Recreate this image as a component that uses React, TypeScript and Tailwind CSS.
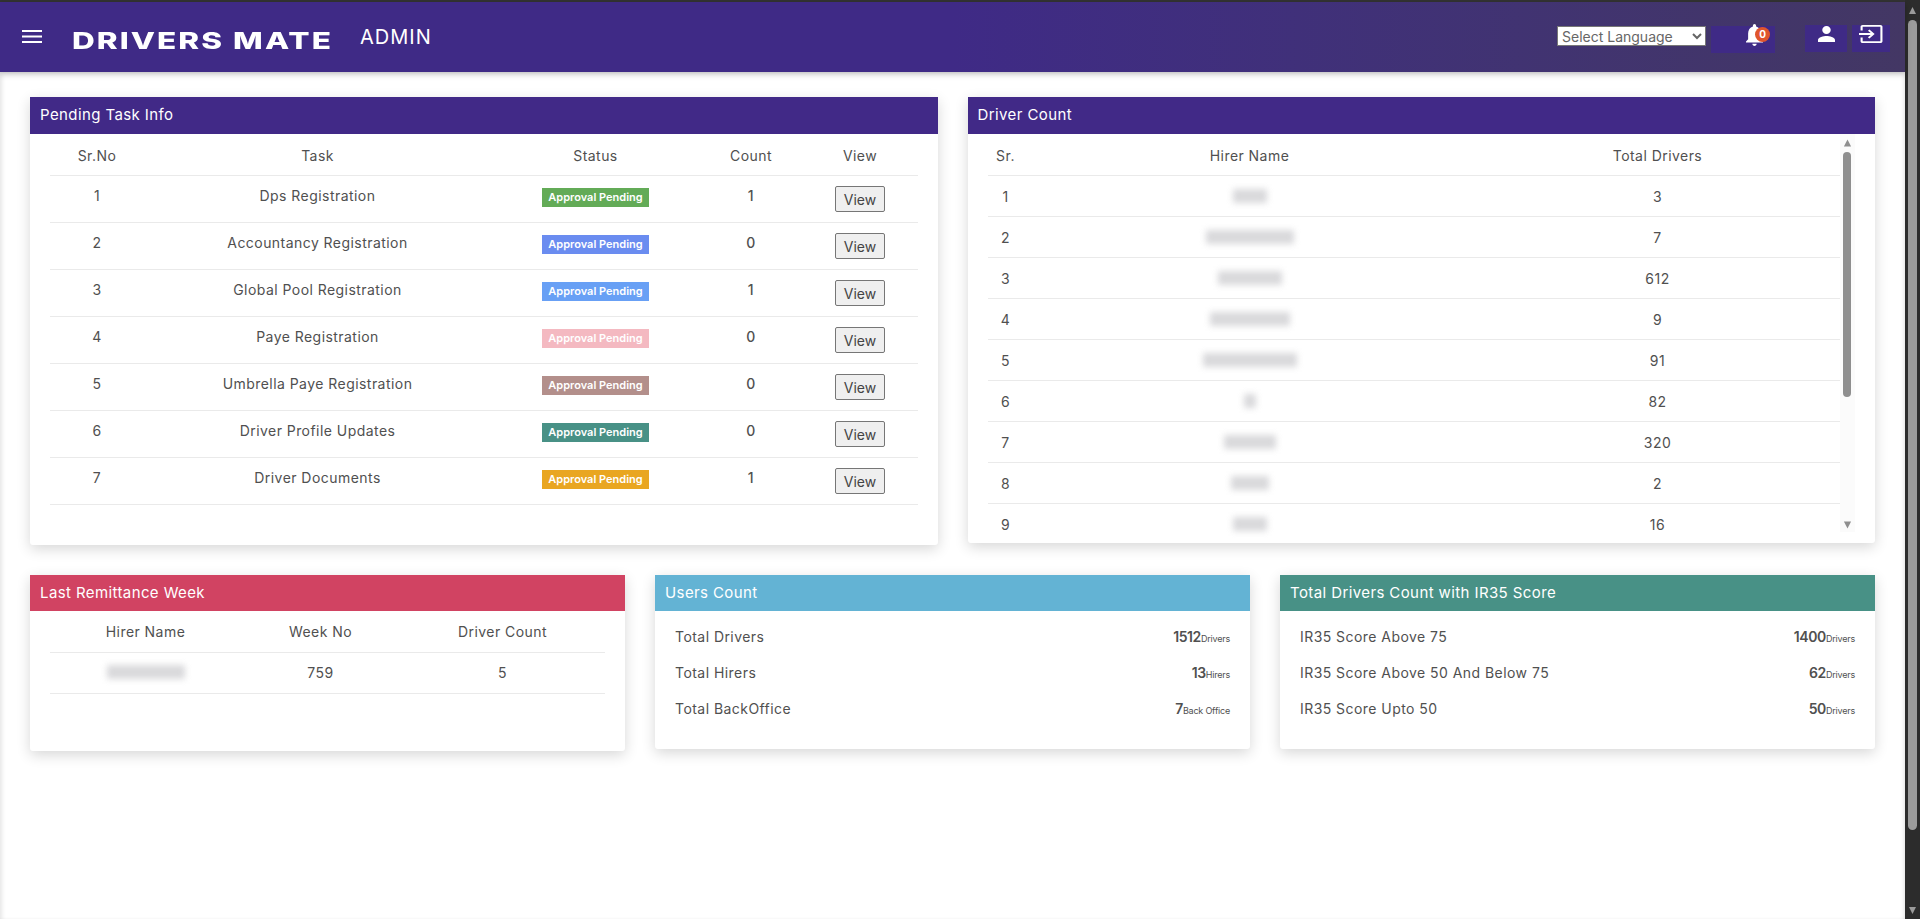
import React from "react";

const tasks = [
  { n: 1, t: "Dps Registration", c: "bg-[#63ab57]", k: 1 },
  { n: 2, t: "Accountancy Registration", c: "bg-[#6a8cf0]", k: 0 },
  { n: 3, t: "Global Pool Registration", c: "bg-[#68a0f5]", k: 1 },
  { n: 4, t: "Paye Registration", c: "bg-[#f4b9c1]", k: 0 },
  { n: 5, t: "Umbrella Paye Registration", c: "bg-[#b38f8b]", k: 0 },
  { n: 6, t: "Driver Profile Updates", c: "bg-[#489186]", k: 0 },
  { n: 7, t: "Driver Documents", c: "bg-[#e9a621]", k: 1 },
];

const drivers = [
  { n: 1, w: "w-[34px]", d: 3 },
  { n: 2, w: "w-[88px]", d: 7 },
  { n: 3, w: "w-[64px]", d: 612 },
  { n: 4, w: "w-[80px]", d: 9 },
  { n: 5, w: "w-[94px]", d: 91 },
  { n: 6, w: "w-[12px]", d: 82 },
  { n: 7, w: "w-[52px]", d: 320 },
  { n: 8, w: "w-[38px]", d: 2 },
  { n: 9, w: "w-[34px]", d: 16 },
];

function Blur({ w }: { w: string }) {
  return <div className={`${w} h-[14px] bg-[#c9c9cc] blur-[3px] opacity-70`} />;
}

function Card({ title, color, className, headH, children }: { title: string; color: string; className: string; headH: string; children: React.ReactNode }) {
  return (
    <section className={`${className} bg-white rounded-b-[3px] shadow-[0_4px_14px_rgba(0,0,0,0.16)] overflow-hidden`}>
      <h2 className={`${color} ${headH} flex items-center text-white text-[15px] tracking-[0.4px] px-[10px] font-normal`}>{title}</h2>
      {children}
    </section>
  );
}

function StatRow({ label, value, unit }: { label: string; value: number; unit: string }) {
  return (
    <div className="flex h-[36px] items-center justify-between">
      <span className="text-[14px] tracking-[0.45px]">{label}</span>
      <span className="flex items-baseline">
        <span className="text-[14px] font-semibold tracking-[-0.4px]">{value}</span>
        <span className="text-[9px] tracking-[-0.2px]">{unit}</span>
      </span>
    </div>
  );
}

function Triangle({ down, className }: { down?: boolean; className: string }) {
  return (
    <svg className={className} viewBox="0 0 10 8" fill="currentColor">
      <path d={down ? "M1 0h8L5 8z" : "M5 0l4 8H1z"} />
    </svg>
  );
}

export default function App() {
  return (
    <div className="h-[919px] overflow-hidden flex bg-white text-[#505050] font-['Inter','Open_Sans',sans-serif]">
      <div className="w-[1905px] flex flex-col border-t-2 border-[#333333]">
        <header className="z-10 h-[70px] shrink-0 flex items-center bg-gradient-to-r from-[#3f2a86] via-[#3f2a86] to-[#433764] shadow-[0_2px_6px_rgba(0,0,0,0.25)] text-white">
          <svg className="ml-[22px] w-[20px] h-[14px]" viewBox="0 0 20 14" fill="white">
            <rect x="0" y="0" width="20" height="2" />
            <rect x="0" y="5.5" width="20" height="2" />
            <rect x="0" y="11" width="20" height="2" />
          </svg>
          <div className="ml-[30px] w-[260px] h-[24px] flex items-center mt-[8px]">
            <span className="origin-left scale-x-[1.37] inline-block text-[23px] leading-[24px] font-extrabold tracking-[1.5px] whitespace-nowrap font-['Inter',sans-serif]">DRIVERS MATE</span>
          </div>
          <span className="ml-[28px] text-[20px] tracking-[1px]">ADMIN</span>
          <div className="ml-auto mr-[15px] flex items-start self-start pt-[23px]">
            <select className="w-[149px] h-[20px] mt-[1px] bg-white text-[#666] text-[14px] border border-[#777] leading-none">
              <option>Select Language</option>
            </select>
            <div className="relative ml-[5px] w-[64px] h-[27px] mt-[1px] bg-[#3f2a86]">
              <svg className="absolute left-[35px] -top-[2px] w-[17px] h-[22px]" viewBox="4 2.5 16 19.5" fill="white" preserveAspectRatio="none">
                <path d="M12 22c1.1 0 2-.9 2-2h-4c0 1.1.9 2 2 2zm6-6v-5c0-3.07-1.63-5.64-4.5-6.32V4c0-.83-.67-1.5-1.5-1.5s-1.5.67-1.5 1.5v.68C7.64 5.36 6 7.92 6 11v5l-2 2v1h16v-1l-2-2z" />
              </svg>
              <span className="absolute left-[44px] top-[1px] w-[15px] h-[15px] rounded-full bg-[#e0552d] text-[10px] leading-[15px] font-bold text-center text-white">0</span>
            </div>
            <div className="ml-[30px] w-[42px] h-[27px] bg-[#3f2a86] flex justify-center pt-[1px]">
              <svg className="w-[17px] h-[16px]" viewBox="4 4 16 16" fill="white" preserveAspectRatio="none">
                <path d="M12 12c2.21 0 4-1.79 4-4s-1.79-4-4-4-4 1.79-4 4 1.79 4 4 4zm0 2c-2.67 0-8 1.34-8 4v2h16v-2c0-2.66-5.33-4-8-4z" />
              </svg>
            </div>
            <div className="ml-[5px] w-[38px] h-[27px] bg-[#3f2a86] flex justify-center">
              <svg className="w-[24px] h-[18px]" viewBox="1 0 23 20" fill="white" preserveAspectRatio="none">
                <path d="M9.5 13.6 11 15l5-5-5-5-1.4 1.4L12.2 9H1v2h11.2l-2.7 2.6zM21.5 0h-17C3.4 0 2.5.9 2.5 2v4h2V2h17v16h-17v-4h-2v4c0 1.1.9 2 2 2h17c1.1 0 2-.9 2-2V2c0-1.1-.9-2-2-2z" />
              </svg>
            </div>
          </div>
        </header>

        <main className="flex-1 px-[30px] pt-[25px] shadow-[inset_4px_0_4px_-2px_rgba(0,0,0,0.1),inset_-3px_0_4px_-2px_rgba(0,0,0,0.12)]">
          <div className="grid grid-cols-2 gap-[30px] items-start">
            <Card title="Pending Task Info" color="bg-[#412987]" headH="h-[37px]" className="h-[448px]">
              <div className="mx-[20px] text-[14px] tracking-[0.45px] text-center">
                <div className="grid grid-cols-[94px_347px_209px_102px_116px] h-[42px] items-center border-b border-[#eaeaea]">
                  <span className="mt-[1px]">Sr.No</span><span className="mt-[1px]">Task</span><span className="mt-[1px]">Status</span><span className="mt-[1px]">Count</span><span className="mt-[1px]">View</span>
                </div>
                {tasks.map((r) => (
                  <div key={r.n} className="grid grid-cols-[94px_347px_209px_102px_116px] h-[47px] items-center border-b border-[#eaeaea]">
                    <span className="-mt-[8px]">{r.n}</span>
                    <span className="-mt-[8px]">{r.t}</span>
                    <span className="flex justify-center -mt-[4px]">
                      <span className={`${r.c} w-[107px] h-[19px] leading-[19px] text-white text-[11px] tracking-normal font-semibold`}>Approval Pending</span>
                    </span>
                    <span className="-mt-[8px] font-medium">{r.k}</span>
                    <span className="flex justify-center">
                      <button className="w-[50px] h-[26px] rounded-[2px] border border-[#767676] bg-[#efefef] text-[#444] text-[14px] tracking-normal">View</button>
                    </span>
                  </div>
                ))}
              </div>
            </Card>

            <Card title="Driver Count" color="bg-[#412987]" headH="h-[37px]" className="h-[446px]">
              <div className="flex h-[409px] ml-[20px] mr-[20px] overflow-hidden">
                <div className="w-[852px] shrink-0 text-[14px] tracking-[0.45px] text-center">
                  <div className="grid grid-cols-[36px_452px_364px] h-[42px] items-center border-b border-[#eaeaea]">
                    <span className="mt-[1px]">Sr.</span><span className="mt-[1px]">Hirer Name</span><span className="mt-[1px]">Total Drivers</span>
                  </div>
                  {drivers.map((r) => (
                    <div key={r.n} className="grid grid-cols-[36px_452px_364px] h-[41px] items-center border-b border-[#eaeaea]">
                      <span>{r.n}</span>
                      <span className="flex justify-center"><Blur w={r.w} /></span>
                      <span>{r.d}</span>
                    </div>
                  ))}
                </div>
                <div className="w-[15px] shrink-0 h-[398px] bg-[#fbfbfb] flex flex-col items-center text-[#8f8f8f]">
                  <Triangle className="w-[9px] h-[8px] mt-[5px]" />
                  <div className="w-[8px] h-[245px] mt-[5px] rounded-full bg-[#8f8f8f]" />
                  <Triangle down className="w-[9px] h-[8px] mt-auto mb-[3px]" />
                </div>
              </div>
            </Card>
          </div>

          <div className="grid grid-cols-3 gap-[30px] mt-[30px] items-start">
            <Card title="Last Remittance Week" color="bg-[#d14362]" headH="h-[36px]" className="h-[176px]">
              <div className="mx-[20px] text-[14px] tracking-[0.45px] text-center">
                <div className="grid grid-cols-[191px_159px_205px] h-[42px] items-center border-b border-[#eaeaea]">
                  <span>Hirer Name</span><span>Week No</span><span>Driver Count</span>
                </div>
                <div className="grid grid-cols-[191px_159px_205px] h-[41px] items-center border-b border-[#eaeaea]">
                  <span className="flex justify-center -mt-[2px]"><Blur w="w-[78px]" /></span>
                  <span className="-mt-[2px]">759</span>
                  <span className="-mt-[2px]">5</span>
                </div>
              </div>
            </Card>
            <Card title="Users Count" color="bg-[#63b3d4]" headH="h-[36px]" className="h-[174px]">
              <div className="px-[20px] pt-[7px]">
                <StatRow label="Total Drivers" value={1512} unit="Drivers" />
                <StatRow label="Total Hirers" value={13} unit="Hirers" />
                <StatRow label="Total BackOffice" value={7} unit="Back Office" />
              </div>
            </Card>
            <Card title="Total Drivers Count with IR35 Score" color="bg-[#489186]" headH="h-[36px]" className="h-[174px]">
              <div className="px-[20px] pt-[7px]">
                <StatRow label="IR35 Score Above 75" value={1400} unit="Drivers" />
                <StatRow label="IR35 Score Above 50 And Below 75" value={62} unit="Drivers" />
                <StatRow label="IR35 Score Upto 50" value={50} unit="Drivers" />
              </div>
            </Card>
          </div>
        </main>
      </div>
      <div className="w-[15px] bg-[#2c2c2c] flex flex-col items-center text-[#9b9b9b]">
        <Triangle className="w-[11px] h-[7px] mt-[7px]" />
        <div className="w-[9px] h-[810px] mt-[6px] rounded-full bg-[#9b9b9b]" />
        <Triangle down className="w-[11px] h-[7px] mt-auto mb-[5px]" />
      </div>
    </div>
  );
}
